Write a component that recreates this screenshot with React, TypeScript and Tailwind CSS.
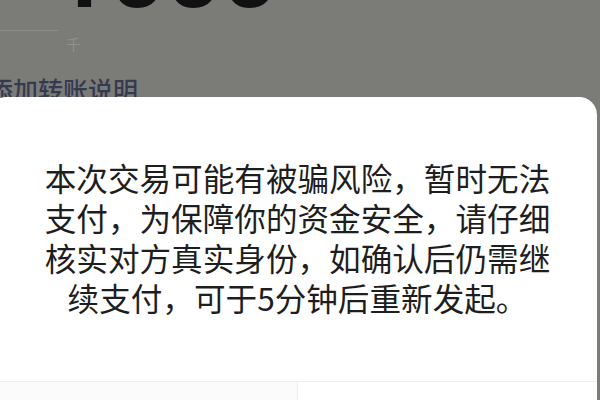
import React from 'react';

const cjk = { fontFamily: '"Noto Sans CJK SC", "Noto Sans", sans-serif' };

export default function App() {
  return (
    <div className="relative h-[400px] w-[600px] overflow-hidden bg-[#7b7c78]" style={cjk}>
      {/* page behind the dialog */}
      <div className="flex flex-col">
        <div
          className="-mt-[68px] ml-[52px] h-[80px] text-[102px] leading-[80px] font-semibold text-[#111] tracking-[-2px]"
          style={{ fontFamily: 'Roboto, "Liberation Sans", sans-serif' }}
        >
          1000
        </div>
        <div className="mt-[18px] flex items-start">
          <div className="h-px w-[58px] bg-[#8c8d8a]" />
          <span className="ml-[8px] mt-[6px] text-[15px] leading-[15px] text-[#8f908d]">千</span>
        </div>
        <div className="mt-[24px] -ml-[12px] text-[25px] leading-[28px] font-medium text-[#363a50]">添加转账说明</div>
      </div>

      {/* dialog */}
      <div className="absolute left-[-12px] top-[97px] flex w-[609px] flex-col rounded-t-[18px] bg-white">
        <div className="pl-[45px] pr-[35px] pt-[60px] text-center text-[31.6px] leading-[40px] text-[#1e1e1e]">
          本次交易可能有被骗风险，暂时无法支付，为保障你的资金安全，请仔细核实对方真实身份，如确认后仍需继续支付，可于5分钟后重新发起。
        </div>
        <div className="mt-[64px] flex h-[40px] border-t border-[#efefef]">
          <button className="w-[310px] border-r border-[#efefef] bg-[#fbfbfb]" />
          <button className="flex-1 bg-white" />
        </div>
      </div>
    </div>
  );
}
